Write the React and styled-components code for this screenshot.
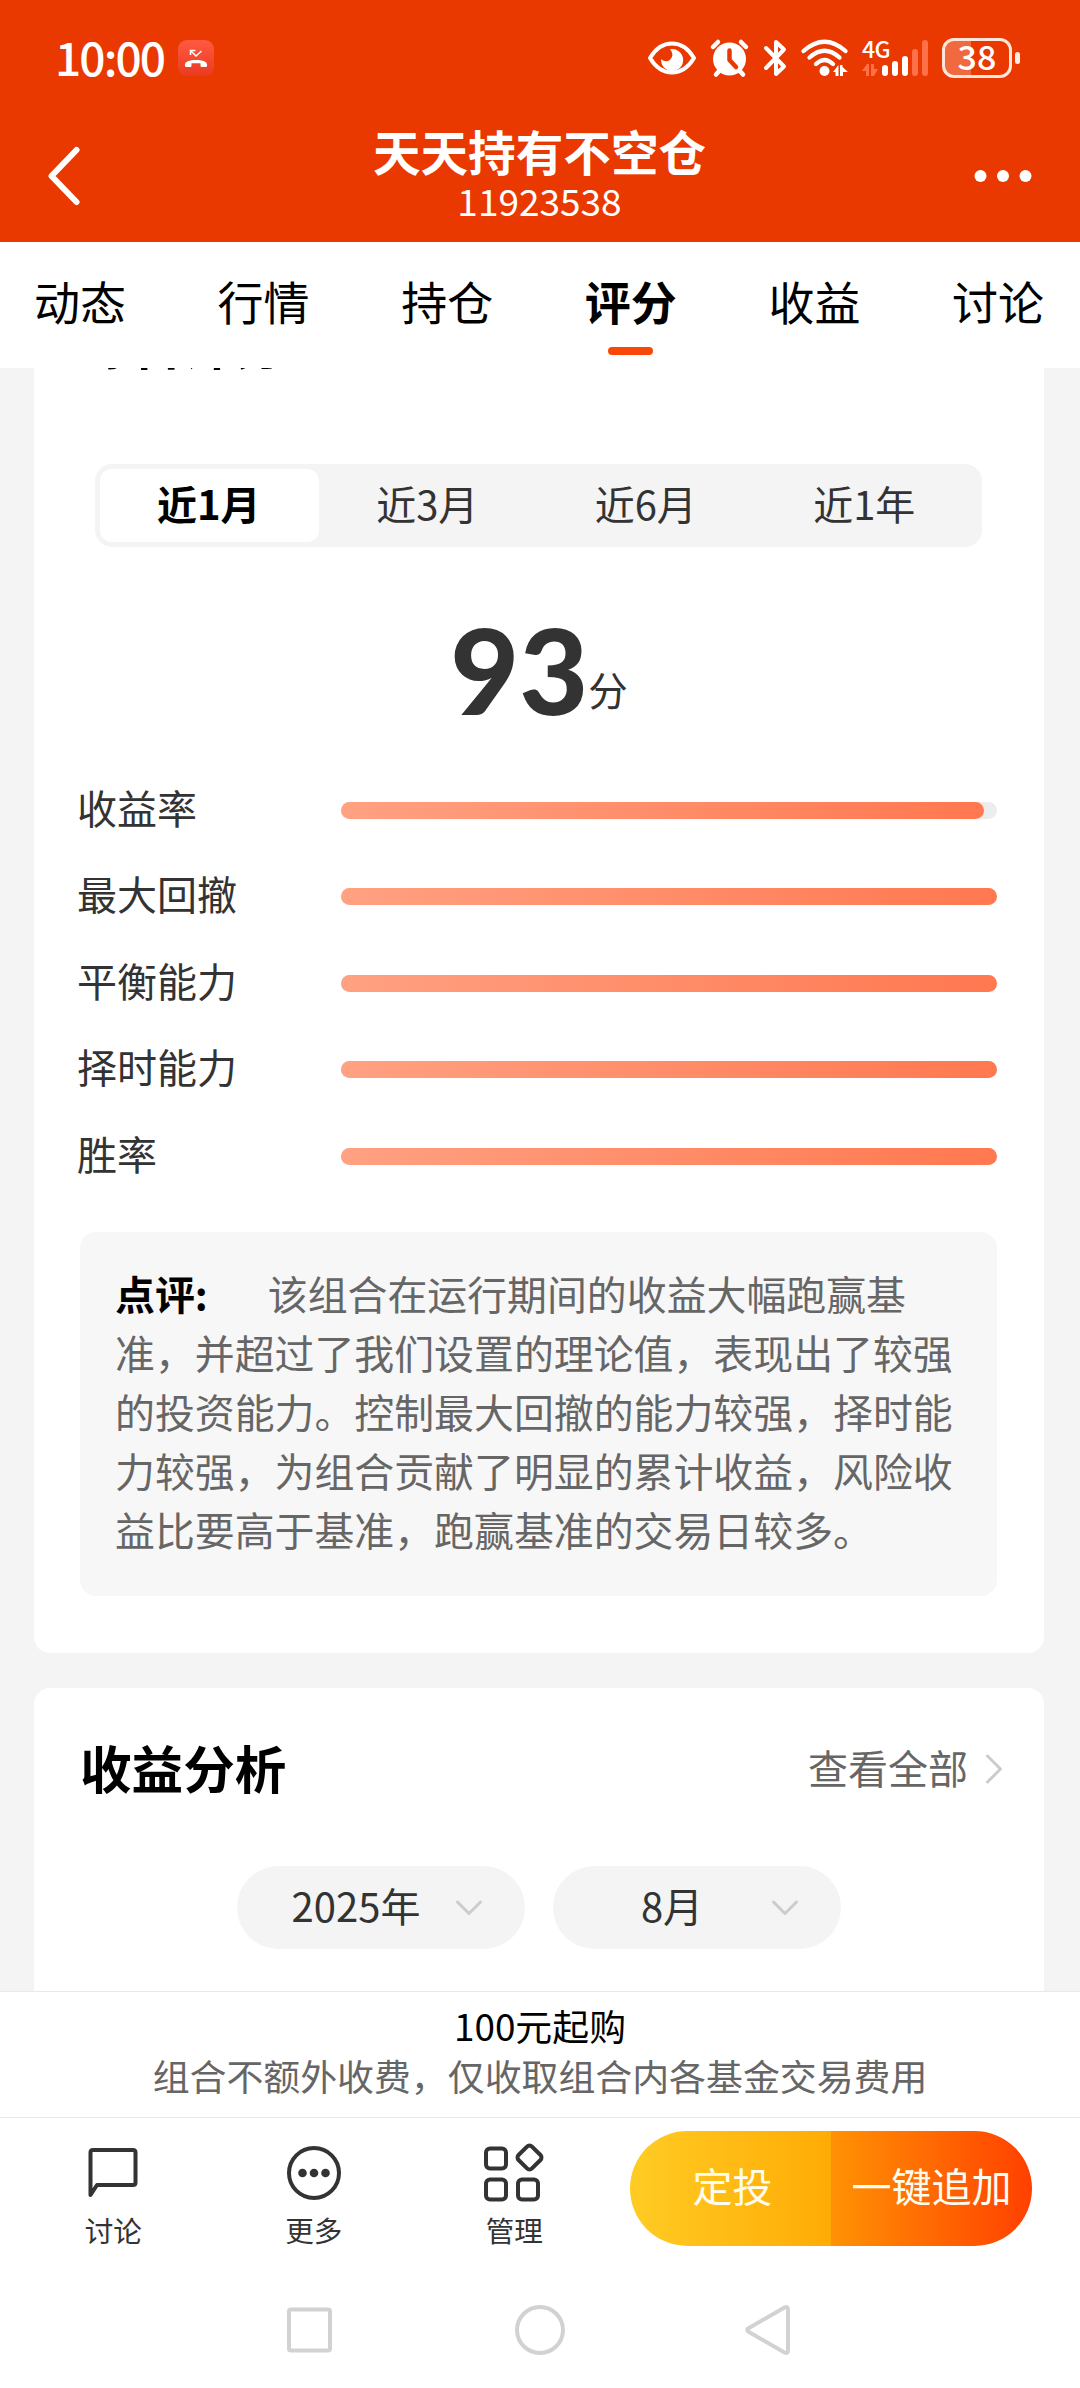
import React from "react";
import styled, { createGlobalStyle } from "styled-components";

const Global = createGlobalStyle`
  * { box-sizing: border-box; }
  body { margin: 0; background: #fff; }
`;

const Screen = styled.div`
  width: 1080px;
  height: 2388px;
  display: flex;
  flex-direction: column;
  overflow: hidden;
  background: #fff;
  color: #333;
  font-family: "Noto Sans CJK SC", "Noto Sans", sans-serif;
  font-size: 40px;
  line-height: 1;
  white-space: nowrap;
`;

/* ---------- header ---------- */
const Header = styled.header`
  height: 242px;
  flex: none;
  background: #e93900;
  color: #fff;
`;
const StatusBar = styled.div`
  height: 110px;
  display: flex;
  align-items: center;
  padding: 6px 60px 0 55px;
`;
const Clock = styled.span`
  width: 123px;
  padding-bottom: 5px;
  font-size: 46px;
  font-weight: 500;
  letter-spacing: -1.9px;
`;
const StatusIcons = styled.div`
  margin-left: auto;
  display: flex;
  align-items: center;
`;
const Glyph = styled.svg`
  display: block;
  flex: none;
  overflow: visible;
  margin-left: ${(p) => p.$gap || 0}px;
`;
const Signal = styled.div`
  width: 66px;
  height: 40px;
  margin-left: 14px;
  display: grid;
`;
const NetLabel = styled.span`
  grid-area: 1 / 1;
  font-size: 23px;
  font-weight: 500;
  line-height: 20px;
  letter-spacing: -0.5px;
`;
const SignalBars = styled(Glyph)`
  grid-area: 1 / 1;
`;
const Battery = styled.div`
  width: 70px;
  height: 40px;
  margin-left: 14px;
  padding-bottom: 4px;
  border: 3px solid #ffe6da;
  border-radius: 12px;
  background: linear-gradient(90deg, #f0693f 41%, transparent 41%);
  display: flex;
  align-items: center;
  justify-content: center;
  font-size: 34px;
  font-weight: 500;
`;
const BatteryTip = styled.i`
  width: 5px;
  height: 12px;
  margin-left: 3px;
  border-radius: 3px;
  background: #ffeee6;
`;
const TitleBar = styled.div`
  height: 132px;
  display: flex;
  align-items: center;
  justify-content: space-between;
  padding: 0 48px 0 47px;
`;
const TitleText = styled.div`
  display: flex;
  flex-direction: column;
  align-items: center;
  margin-left: 24px;
  padding-bottom: 5px;
`;
const Title = styled.h1`
  margin: 0;
  font-size: 47.6px;
  line-height: 54px;
  font-weight: 700;
`;
const Code = styled.span`
  font-size: 37px;
  line-height: 45px;
`;

/* ---------- tabs ---------- */
const Tabs = styled.nav`
  height: 126px;
  flex: none;
  display: flex;
  justify-content: space-between;
  padding: 0 36px 0 34px;
  background: #fff;
`;
const Tab = styled.div`
  display: flex;
  flex-direction: column;
  align-items: center;
  padding-top: 31px;
  font-size: 46px;
  line-height: 54px;
  color: #000;
  font-weight: ${(p) => (p.$active ? 700 : 400)};
  &::after {
    content: "";
    width: 45px;
    height: 8px;
    margin-top: 20px;
    border-radius: 4px;
    background: ${(p) => (p.$active ? "#f9470a" : "transparent")};
  }
`;

/* ---------- content ---------- */
const Content = styled.main`
  height: 1623px;
  flex: none;
  overflow: hidden;
  background: #f4f4f4;
  padding: 0 36px 0 34px;
  display: flex;
  flex-direction: column;
  gap: 35px;
`;
const Card = styled.section`
  flex: none;
  background: #fff;
  border-radius: 16px;
`;
const ScoreCard = styled(Card)`
  height: 1365px;
  margin-top: -80px;
  padding: 25px 47px 0;
`;
const CardTitle = styled.h2`
  margin: 0 0 0 -1px;
  font-size: 51.6px;
  line-height: 60px;
  font-weight: 700;
  color: #000;
`;
const Segments = styled.div`
  width: 887px;
  height: 83px;
  margin: 91px 0 0 14px;
  padding: 5px 8px 5px 5px;
  border-radius: 17px;
  background: #f4f4f4;
  display: flex;
`;
const Segment = styled.div`
  flex: 1;
  height: 73px;
  padding: 0 1px 6px 0;
  border-radius: 12px;
  display: flex;
  align-items: center;
  justify-content: center;
  background: ${(p) => (p.$active ? "#fff" : "transparent")};
  color: ${(p) => (p.$active ? "#000" : "#333")};
  font-weight: ${(p) => (p.$active ? 700 : 400)};
`;
const Score = styled.div`
  height: 163px;
  margin-top: 57px;
  display: flex;
  align-items: flex-start;
  justify-content: center;
`;
const ScoreValue = styled.span`
  font-family: Lato, sans-serif;
  font-size: 119px;
  line-height: 130px;
  font-weight: 900;
`;
const ScoreUnit = styled.span`
  margin-top: 65px;
  font-size: 39.5px;
`;
const Metrics = styled.div`
  display: flex;
  flex-direction: column;
`;
const Metric = styled.div`
  height: 86.5px;
  display: flex;
  align-items: center;
  justify-content: space-between;
`;
const MetricName = styled.span`
  margin-left: -4px;
  padding-bottom: 7px;
`;
const Track = styled.div`
  width: 656px;
  height: 17px;
  border-radius: 9px;
  background: #ededed;
`;
const Fill = styled.div`
  height: 100%;
  border-radius: 9px;
  background: linear-gradient(90deg, #ffa182, #ff7850);
`;
const Review = styled.p`
  width: 917px;
  height: 364px;
  margin: 32.5px 0 0 -1px;
  padding: 31px 30px 0 35px;
  border-radius: 16px;
  background: #f7f7f7;
  color: #666;
  font-size: 39.9px;
  line-height: 59px;
  white-space: normal;
`;
const ReviewLabel = styled.strong`
  margin-right: 60px;
  color: #000;
  font-weight: 700;
`;
const AnalysisCard = styled(Card)`
  height: 400px;
  padding: 49px 40px 0 47px;
`;
const CardHead = styled.div`
  display: flex;
  align-items: center;
  justify-content: space-between;
`;
const ViewAll = styled.span`
  display: flex;
  align-items: center;
  color: #666;
`;
const Selects = styled.div`
  display: flex;
  gap: 28px;
  margin: 69px 0 0 156px;
`;
const Select = styled.div`
  width: 288px;
  height: 83px;
  border-radius: 42px;
  background: #f4f4f4;
  display: flex;
  align-items: center;
  padding: 0 42px 0 20px;
`;
const SelectValue = styled.span`
  flex: 1;
  padding-bottom: 6px;
  text-align: center;
`;

/* ---------- bottom ---------- */
const Notice = styled.div`
  height: 126px;
  flex: none;
  border-top: 1px solid #e9e9e9;
  padding-top: 8px;
  display: flex;
  flex-direction: column;
  align-items: center;
  font-size: 36.9px;
  line-height: 50px;
  color: #666;
`;
const NoticeLead = styled.span`
  color: #000;
`;
const ActionBar = styled.div`
  height: 154px;
  flex: none;
  border-top: 1px solid #e9e9e9;
  display: flex;
  padding: 13px 48px 0 13px;
`;
const Action = styled.div`
  width: 200.5px;
  display: flex;
  flex-direction: column;
  align-items: center;
  font-size: 28.6px;
  line-height: 40px;
`;
const ActionIcon = styled.svg`
  width: 60px;
  height: 60px;
  margin: 12px 0 7px;
  fill: none;
  stroke: #333;
  stroke-width: 4;
  stroke-linejoin: round;
`;
const Buttons = styled.div`
  width: 402px;
  height: 115px;
  margin-left: auto;
  border-radius: 58px;
  overflow: hidden;
  display: flex;
`;
const Button = styled.div`
  width: 201px;
  display: flex;
  align-items: center;
  justify-content: center;
  padding: 0 0 7px ${(p) => p.$shift || 0}px;
  color: #fffdf0;
  background: linear-gradient(90deg, ${(p) => p.$from}, ${(p) => p.$to});
`;
const SystemNav = styled.div`
  height: 116px;
  flex: none;
  display: flex;
  justify-content: center;
  padding: 31px 0 0;
  gap: 175px;
`;
const NavIcon = styled.svg`
  width: 56px;
  height: 56px;
  fill: none;
  stroke: #d2d2d2;
  stroke-width: 4;
  stroke-linejoin: round;
`;

const tabs = ["动态", "行情", "持仓", "评分", "收益", "讨论"];
const periods = ["近1月", "近3月", "近6月", "近1年"];
const metrics = [
  ["收益率", 98],
  ["最大回撤", 100],
  ["平衡能力", 100],
  ["择时能力", 100],
  ["胜率", 100],
];

const MissedCall = () => (
  <Glyph width="36" height="36" viewBox="0 0 36 36" fill="none">
    <defs>
      <linearGradient id="call" x1="0" y1="0" x2="0" y2="1">
        <stop offset="0" stopColor="#ff5a41" />
        <stop offset="1" stopColor="#ea3a22" />
      </linearGradient>
    </defs>
    <rect width="36" height="36" rx="9" fill="url(#call)" />
    <path d="M12.5 15v-4.500h5M12.500 10.500l5.500 5.500 5.500-5" stroke="#fff" strokeWidth="1.500" />
    <path d="M7 25.500c-.5-3 2-5.500 11-5.500s11.500 2.500 11 5.500c0 1.200-.5 1.500-1.500 1.500h-3.500c-1 0-1.500-.5-1.500-1.500v-2.300h-9v2.300c0 1-.5 1.500-1.500 1.500H8.500C7.500 27 7 26.700 7 25.500z" fill="#fff" />
  </Glyph>
);
const Eye = () => (
  <Glyph width="48" height="34" viewBox="0 0 48 34" fill="none">
    <path d="M2 17C8 7 15.500 2.500 24 2.500S40 7 46 17C40 27 32.500 31.500 24 31.500S8 27 2 17z" stroke="#fff" strokeWidth="4" strokeLinejoin="round" />
    <path d="M22 8.300A11 11 0 1 1 13.200 18c2.500 2.500 6 3 8.500 1 3.500-2.800 3.500-7 .3-10.700z" fill="#fff" />
  </Glyph>
);
const Alarm = () => (
  <Glyph $gap={14} width="39" height="38" viewBox="0 0 39 38" fill="none">
    <g stroke="#fff" strokeWidth="4.500" strokeLinecap="round">
      <path d="M3 8l5-5M36 8l-5-5M10 31l-4 4.500M29 31l4 4.500" />
    </g>
    <circle cx="19.500" cy="20" r="16.500" fill="#fff" />
    <path d="M19.500 11.500V21l6.500 7" stroke="#e93900" strokeWidth="4.500" strokeLinecap="round" strokeLinejoin="round" />
  </Glyph>
);
const Bluetooth = () => (
  <Glyph $gap={14} width="24" height="38" viewBox="0 0 24 38" fill="none" stroke="#fff" strokeWidth="4" strokeLinecap="round" strokeLinejoin="round">
    <path d="M3 9l18 18.500-8 7.500V3l8 7.500L3 29" />
  </Glyph>
);
const Wifi = () => (
  <Glyph $gap={14} width="47" height="38" viewBox="0 0 47 38" fill="none">
    <g stroke="#fff" strokeWidth="4.300" strokeLinecap="round">
      <path d="M2.500 12Q23.500-6.500 44.500 12" />
      <path d="M8.500 18.500Q23.500 5 38.500 18.500" />
      <path d="M15 25Q23.500 17 32 25" />
    </g>
    <circle cx="23.500" cy="32" r="5" fill="#fff" />
    <path d="M32 33l5.500-7v11h-3v-4zM39 26l0 11h3v-4h5l-5.500-5v-2z" fill="#fff" />
  </Glyph>
);
const Down = () => (
  <Glyph width="28" height="18" viewBox="0 0 28 18" fill="none" stroke="#ccc" strokeWidth="3" strokeLinecap="round" strokeLinejoin="round">
    <path d="M2.500 3L14 14.500 25.500 3" />
  </Glyph>
);

export default function App() {
  return (
    <Screen>
      <Global />
      <Header>
        <StatusBar>
          <Clock>10:00</Clock>
          <MissedCall />
          <StatusIcons>
            <Eye />
            <Alarm />
            <Bluetooth />
            <Wifi />
            <Signal>
              <NetLabel>4G</NetLabel>
              <SignalBars width="66" height="40" viewBox="0 0 66 40">
                <g fill="#fff">
                  <rect x="20" y="27" width="6" height="11" rx="3" />
                  <rect x="30" y="23" width="6" height="15" rx="3" />
                  <rect x="40" y="18" width="6" height="20" rx="3" />
                </g>
                <g fill="#ff7048">
                  <rect x="50" y="11" width="6" height="27" rx="3" />
                  <rect x="60" y="2" width="6" height="36" rx="3" />
                  <path d="M0 33l5-7h2v12H4v-5zM9 26h3v5h4l-4 7H9z" />
                </g>
              </SignalBars>
            </Signal>
            <Battery>38</Battery>
            <BatteryTip />
          </StatusIcons>
        </StatusBar>
        <TitleBar>
          <Glyph width="34" height="60" viewBox="0 0 34 60" fill="none" stroke="#fff" strokeWidth="6" strokeLinecap="round" strokeLinejoin="round">
            <path d="M29.500 4L4.500 30l25 26" />
          </Glyph>
          <TitleText>
            <Title>天天持有不空仓</Title>
            <Code>11923538</Code>
          </TitleText>
          <Glyph width="58" height="12" viewBox="0 0 58 12" fill="#fff">
            <circle cx="6.500" cy="6" r="6" />
            <circle cx="29" cy="6" r="6" />
            <circle cx="51.500" cy="6" r="6" />
          </Glyph>
        </TitleBar>
      </Header>

      <Tabs>
        {tabs.map((t) => (
          <Tab key={t} $active={t === "评分"}>{t}</Tab>
        ))}
      </Tabs>

      <Content>
        <ScoreCard>
          <CardTitle>综合评分</CardTitle>
          <Segments>
            {periods.map((p, i) => (
              <Segment key={p} $active={i === 0}>{p}</Segment>
            ))}
          </Segments>
          <Score>
            <ScoreValue>93</ScoreValue>
            <ScoreUnit>分</ScoreUnit>
          </Score>
          <Metrics>
            {metrics.map(([name, value]) => (
              <Metric key={name}>
                <MetricName>{name}</MetricName>
                <Track>
                  <Fill style={{ width: `${value}%` }} />
                </Track>
              </Metric>
            ))}
          </Metrics>
          <Review>
            <ReviewLabel>点评:</ReviewLabel>
            该组合在运行期间的收益大幅跑赢基准，并超过了我们设置的理论值，表现出了较强的投资能力。控制最大回撤的能力较强，择时能力较强，为组合贡献了明显的累计收益，风险收益比要高于基准，跑赢基准的交易日较多。
          </Review>
        </ScoreCard>
        <AnalysisCard>
          <CardHead>
            <CardTitle>收益分析</CardTitle>
            <ViewAll>
              查看全部
              <Glyph $gap={16} width="20" height="30" viewBox="0 0 20 30" fill="none" stroke="#ccc" strokeWidth="3" strokeLinecap="round" strokeLinejoin="round">
                <path d="M3.500 4L16.500 17 3.500 30" />
              </Glyph>
            </ViewAll>
          </CardHead>
          <Selects>
            <Select>
              <SelectValue>2025年</SelectValue>
              <Down />
            </Select>
            <Select>
              <SelectValue>8月</SelectValue>
              <Down />
            </Select>
          </Selects>
        </AnalysisCard>
      </Content>

      <Notice>
        <NoticeLead>100元起购</NoticeLead>
        <span>组合不额外收费，仅收取组合内各基金交易费用</span>
      </Notice>
      <ActionBar>
        <Action>
          <ActionIcon viewBox="0 0 60 60">
            <path d="M7.500 52V9.500Q7.500 7 10 7H50Q52.500 7 52.500 9.500V39.500Q52.500 42 50 42H14z" />
          </ActionIcon>
          讨论
        </Action>
        <Action>
          <ActionIcon viewBox="0 0 60 60">
            <circle cx="30" cy="30" r="25" />
            <g fill="#333" stroke="none">
              <circle cx="18.500" cy="30" r="4.300" />
              <circle cx="30" cy="30" r="4.300" />
              <circle cx="41.500" cy="30" r="4.300" />
            </g>
          </ActionIcon>
          更多
        </Action>
        <Action>
          <ActionIcon viewBox="0 0 60 60">
            <rect x="2" y="5.500" width="20" height="20" rx="4" />
            <rect x="2" y="36.500" width="20" height="20" rx="4" />
            <rect x="34" y="36.500" width="20" height="20" rx="4" />
            <rect x="36" y="5" width="19" height="19" rx="3.500" transform="rotate(45 45.500 14.500)" />
          </ActionIcon>
          管理
        </Action>
        <Buttons>
          <Button $from="#ffcc24" $to="#ffab05" $shift={4}>定投</Button>
          <Button $from="#ff9204" $to="#ff4000">一键追加</Button>
        </Buttons>
      </ActionBar>
      <SystemNav>
        <NavIcon viewBox="0 0 56 56">
          <rect x="8" y="7.500" width="41" height="41" rx="2" />
        </NavIcon>
        <NavIcon viewBox="0 0 56 56">
          <circle cx="28" cy="28" r="23" />
        </NavIcon>
        <NavIcon viewBox="0 0 56 56">
          <path d="M5.500 26.200L41.500 5.500Q45 4 45 7.500V48.500Q45 52 41.500 50.500L5.500 29.800Q3 28 5.500 26.200z" />
        </NavIcon>
      </SystemNav>
    </Screen>
  );
}
